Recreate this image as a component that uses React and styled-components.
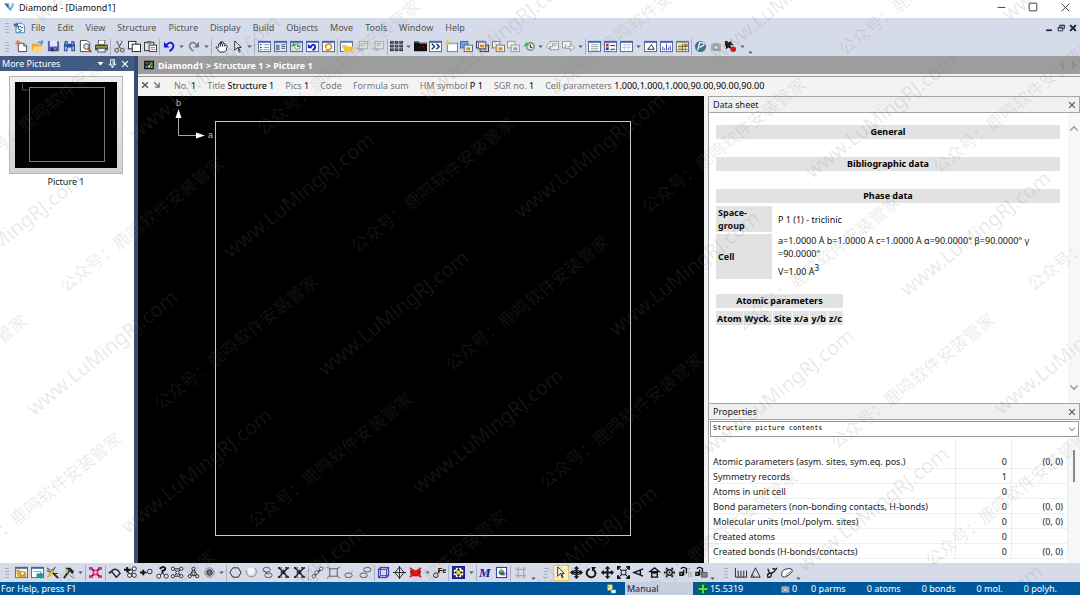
import React from 'react'
import styled, { createGlobalStyle } from 'styled-components'

const line = { fill: 'none', stroke: '#222', strokeWidth: 1 }

// Small window frame shared by many of the toolbar icons
const Win = ({ children, head = '#3c62b0', bg = '#fff' }) => (
    <>
        <rect x="0.5" y="1.5" width="13" height="11" fill={bg} stroke="#56688c" />
        <rect x="0" y="1" width="14" height="2" fill={head} />
        {children}
    </>
)

const Atoms = ({ points, r = 1.8, color = '#222' }) => (
    <>{points.map(([x, y]) => <circle key={`${x}-${y}`} cx={x} cy={y} r={r} fill="#eef1f8" stroke={color} />)}</>
)

const Stacked = ({ a = '#9db8e8', b = '#f5efc8', edge = '#4a67a5', dot = '#d98a10' }) => (
    <>
        <rect x="0.5" y="1.5" width="8" height="7" fill={a} stroke={edge} />
        <rect x="4.5" y="5.5" width="9" height="7" fill={b} stroke={edge} />
        <rect x="7" y="8" width="4" height="3" fill={dot} />
    </>
)

const icons = {
    logo: <><path d="M0 3h5l1 7z" fill="#2a75a8" /><path d="M5 3h7l-4 9-2-2z" fill="#60a8d0" /><path d="M6 3l1 6 3-6z" fill="#fff" /></>,
    doc: <><path d="M3.5 1.5h7l3 3v8h-10z" fill="#fff" stroke="#2b79a8" /><path d="M1 2h5v3H1z" fill="#2378a8" /><path d="M4 6l3-1-1 3 4 2-4 2M8 4l2 3 2-1" {...line} stroke="#174b75" /></>,
    fresh: <><path d="M3.5 3.5h6l3 3v6h-9z" fill="#fff" stroke="#444" /><path d="M9.500 3.500v3h3" {...line} stroke="#444" /><path d="M3 0v6M0 3h6M1 1l4 4M5 1L1 5" stroke="#f06a28" /></>,
    open: <><path d="M1 4h5l1 1h5v7H1z" fill="#e6a936" /><path d="M3 7h11l-3 5H1z" fill="#ffd873" /><path d="M7 3q3-3 5 0M12 0v4H9" {...line} stroke="#3269b2" /></>,
    save: <><path d="M1 1h11l1 1v10H1z" fill="#585bae" /><path d="M3 1h8v6H3z" fill="#e7e7fb" /><path d="M4 9h6v3H4z" fill="#262b55" /><path d="M8 9h1v2H8z" fill="#fff" /></>,
    find: <><path d="M2 1h3v3h4V1h3l1 5v6H9V8H5v4H1V6z" fill="#294f99" /><path d="M2 7h2v4H2zM10 7h2v4h-2zM3 2h1v3H3zM10 2h1v3h-1z" fill="#9ab4e2" /></>,
    preview: <><path d="M1.500 0.500h7l3 3v9h-10z" fill="#fff" stroke="#444" /><circle cx="8" cy="7" r="3" fill="#c9e4f0" stroke="#444" /><path d="M10 9l3 4" stroke="#b44a20" strokeWidth="2" /></>,
    print: <><path d="M4 0h7l-1 5H3z" fill="#fff" stroke="#555" /><path d="M0 5h14v6H0z" fill="#494c4b" /><path d="M1 7h12v1H1z" fill="#e5d43b" /><path d="M3 9h8v4H3z" fill="#eee" stroke="#555" /></>,
    cut: <><path d="M4 1l4 8M10 1L6 9" {...line} stroke="#444" /><circle cx="4" cy="11" r="2" {...line} stroke="#444" /><circle cx="10" cy="11" r="2" {...line} stroke="#444" /></>,
    copy: <><rect x="0.5" y="1.5" width="8" height="8" fill="#fff" stroke="#222" /><rect x="4.5" y="4.5" width="9" height="8" fill="#fff" stroke="#222" /></>,
    paste: <><rect x="0.5" y="2.5" width="10" height="9" fill="#e6e6e6" stroke="#333" /><path d="M3 1h5v3H3z" fill="#777" /><rect x="5.500" y="5.500" width="8" height="7" fill="#fff" stroke="#333" /><path d="M7 8h5M7 10h5" stroke="#888" /></>,
    undo: <><path d="M3 6q5-6 8-1 1 4-4 7" fill="none" stroke="#1717e0" strokeWidth="2" /><path d="M1 2v6h6z" fill="#1717e0" /></>,
    redo: <><path d="M11 6Q6 0 3 5q-1 4 4 7" fill="none" stroke="#777" strokeWidth="1.5" /><path d="M13 2v6H7z" fill="#777" /></>,
    hand: <path d="M4 8V4q1-1 2 1V2q1-1 1 2V2q2-1 2 1v1q2-1 2 1v1q2-1 2 1l-1 4-2 2H5L1 8q1-2 3 1M6 4v3M8 4v3M10 5v2" fill="#fff" stroke="#222" />,
    arrow: <path d="M4 1v10l3-3 2 5 1-1-2-4h3z" fill="#fff" stroke="#222" />,
    list: <Win><path d="M2 5h2M2 8h2M2 10.500h2" stroke="#222" /><path d="M6 5h6M6 8h6M6 10.500h6" stroke="#7b8fb9" /></Win>,
    split: <Win bg="#dfe8f7"><path d="M2 5h4v6H2z" fill="#6e88b6" /><path d="M8 5h4M8 7h4M8 9h4" stroke="#555" /></Win>,
    history: <Win bg="#d8e6d9"><circle cx="8" cy="7" r="3" fill="#fff" stroke="#55916a" /><path d="M8 5v2h2" {...line} /><path d="M1 7l3-4 2 3z" fill="#22a847" /></Win>,
    revert: <Win><path d="M5 7q4-4 5 0 0 3-3 4" fill="none" stroke="#1717e0" strokeWidth="2" /><path d="M2 4v5h5z" fill="#1717e0" /></Win>,
    refresh: <Win><path d="M4 9V6q3-3 6-1M10 5v4q-3 3-6 1" fill="none" stroke="#e09523" strokeWidth="2" /></Win>,
    folderwin: <><Win head="#5a7bb5"><path d="M2 5h5v4H2z" fill="#cbd7ec" /></Win><path d="M4 6h4l1 1h5v6H4z" fill="#f3c634" /></>,
    dimpage: <><rect x="3.500" y="1.500" width="9" height="8" fill="#e2e2e2" stroke="#aaa" /><path d="M5 4h6M5 6h4M0 9h7M2 11h6" stroke="#aaa" /></>,
    grid: <g fill="#333">{[0, 5, 10].map(x => [1, 5, 9].map(y => <rect key={`${x}${y}`} x={x} y={y} width="4" height="3" />))}<path d="M1 2h2M6 2h2M11 2h2M1 6h2M6 6h2M11 6h2M1 10h2M6 10h2M11 10h2" stroke="#888" /></g>,
    black: <><path d="M0 2h5l1 1h8v9H0z" fill="#150b0b" /><path d="M0 1h5l1 2H0z" fill="#3c769b" /><path d="M6 3h8v1H6z" fill="#6d8796" /><path d="M5 9l2-2M9 6l2 4" stroke="#9c1717" /></>,
    next: <Win><path d="M3 4l3 3-3 3M8 4l3 3-3 3" fill="none" stroke="#162f63" strokeWidth="1.500" /></Win>,
    newwin: <><rect x="2.500" y="3.500" width="11" height="9" fill="#fff" stroke="#667ba4" /><path d="M3 4h10" stroke="#94aed8" /><path d="M3 0v6M0 3h6M1 1l4 4M5 1L1 5" stroke="#e1cf20" /></>,
    stack1: <Stacked a="#66a4ec" />,
    stack2: <><Stacked a="#fff" edge="#333" b="#ccc" /><path d="M2.500 1.500h8v8h-8z" fill="#fff" stroke="#2d3f78" /><path d="M2 1h9v2H2z" fill="#6d85bd" /><path d="M4 5h5v3H4z" fill="#d98a10" /></>,
    stack3: <Stacked a="#eee" edge="#777" />,
    stackdim: <Stacked a="#eee" b="#eee" edge="#999" dot="#999" />,
    green: <><circle cx="8" cy="7" r="4" fill="#e5e9e5" stroke="#85a690" strokeWidth="2" /><path d="M0 7l4-5 3 4z" fill="#45bd57" /><path d="M8 5v3h2" {...line} /></>,
    prev2: <><rect x="4.500" y="1.500" width="9" height="9" fill="#eee" stroke="#999" /><path d="M12 4H7v3H4v3L0 7l4-4M8 6h3" fill="#eee" stroke="#999" /></>,
    next2: <><rect x="0.500" y="1.500" width="9" height="7" fill="#eee" stroke="#999" /><path d="M4 5v4h5v3l5-4-5-4v3H6" fill="#eee" stroke="#999" /></>,
    textwin: <Win><path d="M3 5h8M3 7h8M3 9h8M3 11h8" stroke="#a5a5a5" /></Win>,
    legend: <Win><path d="M2 4h3v3H2z" fill="#bb2537" /><path d="M2 8h3v3H2z" fill="#2939ba" /><path d="M7 6h5M7 10h5" stroke="#222" /></Win>,
    tablewin: <Win><path d="M2 5h10M2 8h10M5 4v8M9 4v8" stroke="#c6ceda" /></Win>,
    trianglewin: <Win><path d="M4 10l4-5 3 5z" {...line} /></Win>,
    chartwin: <Win><path d="M3 11V7M5 11V9M7 11V4M9 11V8M11 11V6" stroke="#3636ce" /></Win>,
    datawin: <Win head="#777"><path d="M2 4h5v8H2z" fill="#ecd878" /><path d="M8 4h5v3H8z" fill="#c99a24" /><path d="M2 7h11M2 10h11M7 4v8M10 4v8" stroke="#746641" /></Win>,
    globe: <><circle cx="7" cy="7" r="6" fill="#476f94" /><path d="M4 11l2-8q7-1 4 3L6 8" fill="none" stroke="#e6f1fa" strokeWidth="1.500" /></>,
    camera: <><path d="M3 4l2-1h5l1 1h2v8H2V4z" fill="#aaaeb4" /><circle cx="7.500" cy="8" r="2.500" fill="#ddd" stroke="#777" /></>,
    movie: <><path d="M1 1h3v2l4-2v3h2v2L7 5v3H5l-3 2V7L1 5z" fill="#171717" /><path d="M6 7l3 3" stroke="#171717" strokeWidth="2" /><circle cx="10" cy="10" r="3" fill="#dc1419" /></>,

    picset: <Win bg="#fff6d0"><path d="M1 4h4l1 2h6v6H3z" fill="#d0a83d" /><circle cx="8" cy="8" r="2" fill="#fff" stroke="#b08320" /></Win>,
    exportwin: <Win><path d="M3 6h8" stroke="#999" /><path d="M6 8h4V6l4 4-4 4v-2H6z" fill="#1796a1" /></Win>,
    wand: <><path d="M6 6l7 7" stroke="#222" strokeWidth="2" /><path d="M2 12l5-9M1 5l7 3M10 1L7 6M1 2l4 3M8 8h5" stroke="#222" /><path d="M6 4l3 2-4 5-4 1z" fill="#cfc715" /></>,
    hammer: <><path d="M3 2l6 0 4 4-2 3-3-4z" fill="#222" /><path d="M8 5l-6 8" stroke="#222" strokeWidth="2" /><path d="M3 4l4 1-1 3z" fill="#d4c51a" /><path d="M8 10l5 3" stroke="#777" /></>,
    burst: <><path d="M2 2l10 10M12 2L2 12" stroke="#161616" strokeWidth="2" /><rect x="4" y="4" width="6" height="6" fill="#ef12b8" /><path d="M0 1h4v3H0zM10 1h4v3h-4zM0 10h4v3H0zM10 10h4v3h-4z" fill="#f02084" /><circle cx="7" cy="7" r="1.500" fill="#ffe04a" /></>,
    arc: <path d="M2 8q4-7 9-3l2 3-4 4-5-6M2 8l-1-2" {...line} strokeWidth="1.500" />,
    addatoms: <><Atoms points={[[6, 10], [11, 3], [11, 10], [7, 6]]} r={2.200} /><path d="M0 4h7M3.500 1v6" stroke="#111" strokeWidth="2" /></>,
    addatom: <><path d="M0 7h7M3.500 4v6" stroke="#111" strokeWidth="2" /><circle cx="10.500" cy="6" r="2.500" {...line} /></>,
    query: <><path d="M7 7l-4 4M7 8l4 3" {...line} /><Atoms points={[[3, 11], [11, 11]]} r={2.200} /><path d="M4 3q5-4 6 0 0 2-3 2v3" fill="none" stroke="#111" strokeWidth="2" /></>,
    cluster: <><path d="M3 3l8 8M11 3l-8 8M3 3h8M3 11h8" stroke="#222" /><Atoms points={[[2, 3], [11, 3], [2, 11], [11, 11], [7, 7]]} /></>,
    tetra: <><path d="M7 3L3 10h8L7 3" {...line} /><Atoms points={[[7, 3], [3, 11], [11, 11], [7, 8]]} r={1.700} /></>,
    target: <><circle cx="7" cy="7" r="5" fill="none" stroke="#777" /><circle cx="7" cy="7" r="3" fill="#777" stroke="#222" /></>,
    hexagon: <path d="M4 2h6l3 5-3 5H4L1 7z" {...line} />,
    arcdim: <><path d="M10 2q4 3 1 8-5 4-9-1l-1-4" {...line} stroke="#888" /><path d="M3 3q3-3 7 0v6H4z" fill="#f3f4f7" /></>,
    pair: <><ellipse cx="6" cy="4" rx="4" ry="2.500" {...line} stroke="#555" /><ellipse cx="8" cy="10" rx="4" ry="2.500" {...line} stroke="#555" /><path d="M3 5l5 4" stroke="#555" /></>,
    crossatoms: <><path d="M2 2l10 10M12 2L2 12" stroke="#222" strokeWidth="1.500" /><path d="M1 2h4M9 2h4M1 12h4M9 12h4M4 7h6M7 4v6" stroke="#222" strokeWidth="2" strokeDasharray="2 1" /></>,
    bond: <><path d="M4 10l7-7" stroke="#444" strokeWidth="2" /><Atoms points={[[3, 11], [11, 3], [6, 7]]} color="#555" /></>,
    square: <><path d="M3 3h8v8H3zM0 1l3 2M14 1l-3 2M0 13l3-2M14 13l-3-2" {...line} stroke="#555" /></>,
    ring: <><ellipse cx="6" cy="10" rx="4" ry="2.500" {...line} stroke="#555" /><path d="M8 8l3-3" {...line} stroke="#aaa" /></>,
    rings: <><ellipse cx="9" cy="4" rx="4" ry="2.500" {...line} stroke="#555" /><ellipse cx="5" cy="10" rx="4" ry="2.500" {...line} stroke="#555" /></>,
    cell: <path d="M1.500 3.500h9v9h-9zM3.500 1.500h9v9h-9zM1.500 3.500l2-2M10.500 3.500l2-2M1.500 12.500l2-2M10.500 12.500l2-2" fill="none" stroke="#2525ac" />,
    planes: <path d="M7 1l5 6-5 6-5-6zM0 7h14M7 0v14" {...line} />,
    nocell: <><path d="M1 5l3-2 3 2 3-2 3 2-1 6H2z" fill="#8a2a14" /><path d="M1 2l12 10M13 2L1 12" stroke="#f21616" strokeWidth="2" /><path d="M3 5h8M3 9h8" stroke="#f21616" strokeDasharray="2 1" /></>,
    label: <><circle cx="3" cy="10" r="2.500" {...line} /><path d="M5 8l2-3" {...line} /><text x="5" y="7" fontFamily="Liberation Sans" fontSize="8" fontWeight="700">Fe</text></>,
    fit: <><rect x="1" y="1" width="12" height="12" fill="#fff" stroke="#171b9b" strokeWidth="2" /><path d="M7 2l2 3H5zM7 12l2-3H5zM2 7l3-2v4zM12 7L9 5v4z" fill="#111" /><path d="M5 5h4v4H5z" fill="#f3d42a" /><path d="M2 2h2v2H2zM10 2h2v2h-2zM2 10h2v2H2zM10 10h2v2h-2z" fill="#111" /></>,
    measure: <text x="0" y="12" fill="#1717a8" fontFamily="Liberation Serif" fontSize="14" fontStyle="italic" fontWeight="700">M</text>,
    photo: <><rect x="1.500" y="1.500" width="11" height="11" fill="#fff" stroke="#1b27a5" /><circle cx="7" cy="7" r="3" fill="#2b8c86" /><path d="M6 2l6 6-2 3-4-3z" fill="#de8b93" /><circle cx="8" cy="8" r="2" fill="#127d78" /></>,
    frame: <path d="M4.500 1v12M10.500 1v12M1 3.500h12M1 10.500h12" fill="none" stroke="#999" />,
    move3: <><path d="M7 0l3 3H4zM7 14l3-3H4zM0 7l3-3v6zM14 7l-3-3v6z" fill="#161616" /><path d="M7 2v10M2 7h10" stroke="#161616" strokeWidth="2" /><ellipse cx="7" cy="7" rx="4" ry="2.500" fill="none" stroke="#161616" /></>,
    rotate: <><path d="M5 3q-4 2-3 6 3 5 8 2 3-4-1-7" fill="none" stroke="#111" strokeWidth="2" /><path d="M7 1h5L8 6z" fill="#111" /></>,
    cross: <><path d="M7 0l3 3H4zM7 14l3-3H4zM0 7l3-3v6zM14 7l-3-3v6z" fill="#161616" /><path d="M7 2v10M2 7h10" stroke="#161616" strokeWidth="2" /></>,
    scale: <><rect x="4.500" y="4.500" width="5" height="5" fill="none" stroke="#111" /><path d="M1 4V1h3M10 1h3v3M13 10v3h-3M4 13H1v-3" fill="none" stroke="#111" strokeWidth="2" /><path d="M2 2l3 3M12 2L9 5M2 12l3-3M12 12L9 9" stroke="#111" /></>,
    angle: <path d="M12 3L2 7l10 4M9 4v6" fill="none" stroke="#111" strokeWidth="1.500" />,
    house: <path d="M7 2l5 4H2zM4 7h6v5H4zM3 12h8M7 6v3" fill="none" stroke="#111" strokeWidth="1.500" />,
    spin: <><circle cx="7" cy="7" r="3" fill="#fff" stroke="#111" strokeWidth="1.500" /><path d="M3 3h2M9 3h2M1 7h2M11 7h2M3 11h2M9 11h2M6 7h2" stroke="#111" strokeWidth="2" /></>,
    track: <><path d="M2 3q3-3 6 0v5M1 7h3v3H1zM5 4v6" fill="none" stroke="#111" strokeWidth="1.500" /><path d="M9 3h3M10.500 6v6M13 6v6" stroke="#999" /></>,
    track2: <><path d="M2 3q3-3 6 0v4M1 7h3v3H1zM5 4v6" fill="none" stroke="#111" strokeWidth="1.500" /><path d="M7 7h6v5H7z" fill="#888" stroke="#555" /></>,
    comb: <path d="M1.500 2v10h12M4.500 5v7M7.500 5v7M10.500 5v7M13.500 5v7" {...line} />,
    triangle: <path d="M2 12l5-10 5 10zM5 12q0-2-2-3" {...line} />,
    torsion: <path d="M3 3l2 5 4-1 4-5M8 3h3M5 8q-3 0-2 4 4 1 4-4l-3-1" {...line} strokeWidth="1.500" />,
    ellipse: <><path d="M2 8q0-4 6-5 6-1 5 3-2 4-8 6-4 0-3-4z" fill="#fff" stroke="#222" /><path d="M6 11q2-4 6-5" {...line} stroke="#777" /></>,
    crumb: <><path d="M0 1h14v12H0z" fill="#0d1c3f" /><path d="M2 3h4v3H2z" fill="#de291c" /><path d="M8 3h4v4H8zM2 8h3v3H2z" fill="#39b43f" /><path d="M6 7h3v4H6zM10 8h2v3h-2z" fill="#e8d82b" /></>,
    statuspic: <><path d="M2 1h7v8H2z" fill="#f5f5cf" stroke="#648e48" /><path d="M3 3h3v3H3z" fill="#d0c12e" /><path d="M7 8h7v5H7z" fill="#fff" stroke="#316696" /></>,
    plus: <><path d="M0 0h14v14H0z" fill="#0a6b3a" /><path d="M7 1v12M1 7h12" stroke="#48e060" strokeWidth="3" /><path d="M3 3h2v2H3zM9 3h2v2H9zM3 9h2v2H3zM9 9h2v2H9z" fill="#222" /></>,
    cross2: <path d="M3 3l8 8M11 3l-8 8" fill="none" stroke="#555" strokeWidth="2" />,
    corner: <path d="M3 3l7 7M10 4v6H4" fill="none" stroke="#777" strokeWidth="2" />,
    min: <path d="M3 7.500h9" stroke="#222" />,
    max: <rect x="2.500" y="2.500" width="9" height="9" rx="1" fill="none" stroke="#222" />,
    close: <path d="M3 3l9 9M12 3l-9 9" stroke="#222" />,
    mdimin: <path d="M2 11h10" stroke="#15203e" strokeWidth="3" />,
    mdirestore: <path d="M5 5V2h8v6h-3M5 3h8M2 6h8v6H2zM2 7h8" fill="none" stroke="#15203e" strokeWidth="1.500" />,
    mdiclose: <path d="M2 2l10 10M12 2L2 12" stroke="#15203e" strokeWidth="3.500" />,
    caret: <path d="M1 4h12L7 11z" fill="currentColor" />,
    pin: <path d="M4 1h6v7h2v1H8v4H6V9H2V8h2zM8 2v6" fill="none" stroke="currentColor" strokeWidth="1.500" />,
    x: <path d="M2 2l10 10M12 2L2 12" stroke="currentColor" strokeWidth="2" />,
    up: <path d="M2 9l5-5 5 5" fill="none" stroke="#999" strokeWidth="2" />,
    down: <path d="M2 5l5 5 5-5" fill="none" stroke="#999" strokeWidth="2" />,
    left: <path d="M10 2v10L4 7z" fill="none" stroke="#777" />,
    right: <path d="M4 2v10l6-5z" fill="none" stroke="#777" />,
}

const Icon = ({ name, size = 12 }) => <Svg viewBox="0 0 14 14" width={size} height={size} aria-hidden="true">{icons[name]}</Svg>

// '-' in a group is a drop-down arrow, '+' is the overflow arrow at the end of a bar
const topGroups = [
    [98, ['fresh', 'open', 'save', 'find', 'preview', 'print']],
    [49, ['cut', 'copy', 'paste']],
    [52, ['undo', '-', 'redo', '-']],
    [43, ['hand', 'arrow', '-']],
    [83, ['list', 'split', 'history', 'revert', 'refresh']],
    [50, ['folderwin', 'dimpage', 'dimpage']],
    [198, ['grid', '-', 'black', 'next', 'newwin', 'stack1', 'stack2', 'stack3', 'stackdim', 'green', '-', 'prev2', 'next2', '-']],
    [106, ['textwin', 'legend', 'tablewin', '-', 'trianglewin', 'chartwin', 'datawin']],
    [64, ['globe', 'camera', 'movie', '-', '+'], true],
]
const buildGroups = [
    [73, ['picset', 'exportwin', 'wand', 'hammer', '-']],
    [20, ['burst']],
    [121, ['arc', 'addatoms', 'addatom', 'query', 'cluster', 'tetra', 'target', '-']],
    [82, ['hexagon', 'arcdim', 'pair', 'crossatoms', 'crossatoms']],
    [66, ['bond', 'square', 'ring', 'rings']],
    [74, ['cell', 'planes', 'nocell', '-', 'label']],
    [28, ['fit', '-']],
    [34, ['measure', 'photo']],
    [28, ['frame', '+'], true],
]
const moveGroups = [[167, ['arrow', 'move3', 'rotate', 'cross', 'scale', 'angle', 'house', 'spin', 'track', 'track2', '+'], true]]
const measureGroups = [[72, ['comb', 'triangle', 'torsion', 'ellipse', '+'], true]]

const menus = ['File', 'Edit', 'View', 'Structure', 'Picture', 'Display', 'Build', 'Objects', 'Move', 'Tools', 'Window', 'Help']

const info = [
    ['No.', '1'], ['Title', 'Structure 1'], ['Pics', '1'], ['Code', ''], ['Formula sum', ''],
    ['HM symbol', 'P 1'], ['SGR no.', '1'], ['Cell parameters', '1.000,1.000,1.000,90.00,90.00,90.00'],
]

const properties = [
    ['Atomic parameters (asym. sites, sym.eq. pos.)', '0', '(0, 0)'],
    ['Symmetry records', '1', ''],
    ['Atoms in unit cell', '0', ''],
    ['Bond parameters (non-bonding contacts, H-bonds)', '0', '(0, 0)'],
    ['Molecular units (mol./polym. sites)', '0', '(0, 0)'],
    ['Created atoms', '0', ''],
    ['Created bonds (H-bonds/contacts)', '0', '(0, 0)'],
]

const Groups = ({ groups, active }) => groups.map(([width, items, last], g) => (
    <ToolGroup key={g} $width={width} $last={last}>
        {items.map((item, i) => item === '-' || item === '+'
            ? <CaretButton key={i} aria-label="More options" $low={item === '+'}><Icon name="caret" size={5} /></CaretButton>
            : <ToolButton key={i} aria-label={item} $active={item === active}><Icon name={item} size={13} /></ToolButton>
        )}
    </ToolGroup>
))

// Only the cells of the rotated sheet that cross the window carry a text
const onPage = (row, col) => {
    const v = 75.5 * row - 40
    const start = 252 * col - (row % 2 ? 486 : 384)
    return [20, 100, 185].some(d => {
        const x = 0.78 * (start + d) + 0.625 * v
        const y = 0.78 * v - 0.625 * (start + d)
        return x > 0 && x < 1080 && y > 0 && y < 583
    })
}

const Watermark = () => (
    <WatermarkLayer aria-hidden="true">
        <WatermarkSheet>
            {[...Array(16)].map((_, row) => (
                <WatermarkRow key={row} $latin={row % 2 === 1}>
                    {[...Array(6)].map((_, col) => (
                        <WatermarkText key={col} $latin={row % 2 === 1}>
                            {onPage(row, col) && (row % 2 ? 'www.LuMingRJ.com' : '公众号：鹿鸣软件安装管家')}
                        </WatermarkText>
                    ))}
                </WatermarkRow>
            ))}
        </WatermarkSheet>
    </WatermarkLayer>
)

const App = () => (
    <Window>
        <GlobalStyle />
        <TitleBar>
            <Icon name="logo" />
            <Title>Diamond - [Diamond1]</Title>
            <WindowButtons>
                <PlainButton aria-label="Minimize"><Icon name="min" /></PlainButton>
                <PlainButton aria-label="Maximize"><Icon name="max" /></PlainButton>
                <PlainButton aria-label="Close"><Icon name="close" /></PlainButton>
            </WindowButtons>
        </TitleBar>

        <MenuBar>
            <Grip />
            <Icon name="doc" />
            <Menus>
                {menus.map(menu => <PlainButton key={menu}>{menu}</PlainButton>)}
            </Menus>
            <MdiButtons>
                <PlainButton aria-label="Minimize document"><Icon name="mdimin" size={8} /></PlainButton>
                <PlainButton aria-label="Restore document"><Icon name="mdirestore" size={8} /></PlainButton>
                <PlainButton aria-label="Close document"><Icon name="mdiclose" size={8} /></PlainButton>
            </MdiButtons>
        </MenuBar>
        <ToolBar>
            <Grip />
            <Groups groups={topGroups} />
        </ToolBar>

        <Workspace>
            <Dock>
                <DockHead>
                    <DockTitle>More Pictures</DockTitle>
                    <PlainButton aria-label="Options"><Icon name="caret" size={7} /></PlainButton>
                    <PlainButton aria-label="Pin"><Icon name="pin" size={9} /></PlainButton>
                    <PlainButton aria-label="Close pictures"><Icon name="x" size={8} /></PlainButton>
                </DockHead>
                <Picture>
                    <Thumb>
                        <svg viewBox="0 0 102 86" width="102" height="86" aria-hidden="true">
                            <rect width="102" height="86" />
                            <rect x="14.5" y="5.5" width="75" height="74" fill="none" stroke="#777" />
                            <path d="M7.500 1v7h6" fill="none" stroke="#555" />
                        </svg>
                    </Thumb>
                    Picture 1
                </Picture>
            </Dock>

            <Document>
                <Crumbs>
                    <Icon name="crumb" size={10} />
                    <CrumbText>Diamond1 &gt; Structure 1 &gt; Picture 1</CrumbText>
                    <PlainButton aria-label="Previous"><Icon name="left" size={8} /></PlainButton>
                    <PlainButton aria-label="Next"><Icon name="right" size={8} /></PlainButton>
                </Crumbs>
                <InfoBar>
                    <PlainButton aria-label="Hide info"><Icon name="cross2" size={10} /></PlainButton>
                    <PlainButton aria-label="Expand info"><Icon name="corner" size={10} /></PlainButton>
                    <InfoItems>
                        {info.map(([label, value]) => <InfoItem key={label}>{label} <b>{value}</b></InfoItem>)}
                    </InfoItems>
                </InfoBar>
                <Content>
                    <Canvas>
                        <svg width="566" height="466" viewBox="0 0 566 466" role="img" aria-label="Unit cell">
                            <rect x="77.5" y="25.500" width="415" height="414" fill="none" stroke="#c8c8c8" />
                            <path d="M40.500 20v19.500H60" fill="none" stroke="#aaa" />
                            <path d="M40.500 13l3 9h-6zM67 39.500l-9 3v-6z" fill="#fff" />
                            <g fill="#bbb" fontFamily="Liberation Sans" fontSize="9">
                                <text x="38" y="10">b</text>
                                <text x="70" y="42">a</text>
                            </g>
                        </svg>
                    </Canvas>
                    <Side>
                        <PanelHead>
                            <PanelTitle>Data sheet</PanelTitle>
                            <PlainButton aria-label="Close data sheet"><Icon name="x" size={8} /></PlainButton>
                        </PanelHead>
                        <Sheet>
                            <SheetBody>
                                <SheetHead>General</SheetHead>
                                <SheetHead>Bibliographic data</SheetHead>
                                <PhaseHead>Phase data</PhaseHead>
                                <PhaseTable>
                                    <tbody>
                                        <tr><th scope="row">Space-<br />group</th><td>P 1 (1) - triclinic</td></tr>
                                        <tr>
                                            <th scope="row">Cell</th>
                                            <td>a=1.0000 Å b=1.0000 Å c=1.0000 Å α=90.0000° β=90.0000° γ<br />=90.0000°<br /><Volume>V=1.00 Å<sup>3</sup></Volume></td>
                                        </tr>
                                    </tbody>
                                </PhaseTable>
                                <AtomTable>
                                    <caption>Atomic parameters</caption>
                                    <thead>
                                        <tr>{['Atom', 'Wyck.', 'Site', 'x/a', 'y/b', 'z/c'].map(h => <th key={h} scope="col">{h}</th>)}</tr>
                                    </thead>
                                </AtomTable>
                            </SheetBody>
                            <ScrollBar>
                                <PlainButton aria-label="Scroll up"><Icon name="up" size={10} /></PlainButton>
                                <PlainButton aria-label="Scroll down"><Icon name="down" size={10} /></PlainButton>
                            </ScrollBar>
                        </Sheet>
                        <PanelHead>
                            <PanelTitle>Properties</PanelTitle>
                            <PlainButton aria-label="Close properties"><Icon name="x" size={8} /></PlainButton>
                        </PanelHead>
                        <SelectBox>
                            <Select aria-label="Property set" defaultValue="contents">
                                <option value="contents">Structure picture contents</option>
                            </Select>
                            <Icon name="down" size={8} />
                        </SelectBox>
                        <PropertyPane>
                            <PropertyTable>
                                <tbody>
                                    <tr><td /><td /><td /></tr>
                                    {properties.map(([name, value, extra]) => (
                                        <tr key={name}><td>{name}</td><td>{value}</td><td>{extra}</td></tr>
                                    ))}
                                </tbody>
                            </PropertyTable>
                            <ThumbTrack><ThumbBar /></ThumbTrack>
                        </PropertyPane>
                    </Side>
                </Content>
            </Document>
        </Workspace>

        <ToolBar>
            <Grip />
            <Groups groups={buildGroups} />
            <Grip />
            <Groups groups={moveGroups} active="arrow" />
            <Grip />
            <Groups groups={measureGroups} />
        </ToolBar>
        <StatusBar>
            <StatusHelp>For Help, press F1</StatusHelp>
            <StatusTools>
                <Icon name="statuspic" size={10} />
                <Mode>Manual</Mode>
                <Icon name="plus" size={10} />
                <Zoom>15.5319</Zoom>
                <Icon name="camera" size={10} />
                <span>0</span>
            </StatusTools>
            <Counts>
                {['parms', 'atoms', 'bonds', 'mol.', 'polyh.'].map(c => <span key={c}>0 {c}</span>)}
            </Counts>
        </StatusBar>
        <Watermark />
    </Window>
)

export default App


const GlobalStyle = createGlobalStyle`
    * { box-sizing: border-box; }
    body {
        margin: 0;
        font: 9px/13px "Noto Sans", "Open Sans", "Noto Sans CJK SC", sans-serif;
        color: #222;
    }
    button, select { font: inherit; color: inherit; }
`
const Window = styled.div`
    position: relative;
    display: flex;
    flex-direction: column;
    height: 100vh;
    overflow: hidden;
    background: #fff;
`
const Svg = styled.svg`
    display: block;
    flex: none;
`
const PlainButton = styled.button`
    display: flex;
    align-items: center;
    justify-content: center;
    padding: 0;
    border: 0;
    background: none;
`
const TitleBar = styled.header`
    display: flex;
    align-items: center;
    gap: 3px;
    height: 18px;
    padding: 0 9px 4px 4px;
`
const Title = styled.h1`
    flex: 1;
    margin: 0;
    font-size: 9px;
    font-weight: 400;
    color: #111;
`
const WindowButtons = styled.div`
    display: flex;
    gap: 20px;
`
//*************************** */

const MenuBar = styled.nav`
    display: flex;
    align-items: center;
    height: 19px;
    padding-right: 3px;
    background: #d6dbe9;
    color: #555;
`
const Grip = styled.span`
    flex: none;
    width: 4px;
    height: 12px;
    margin: 0 4px 0 5px;
    background: radial-gradient(circle, #aab0c2 1px, transparent 1px) 0 0 / 2px 3px;
`
const Menus = styled.div`
    display: flex;
    flex: 1;
    gap: 12px;
    margin-left: 6px;
`
const MdiButtons = styled.div`
    display: flex;
    gap: 4px;
`
const ToolBar = styled.div`
    display: flex;
    align-items: center;
    height: 19px;
    background: #d6dbe9;
`
const ToolGroup = styled.div`
    display: flex;
    align-items: center;
    width: ${(props) => props.$width}px;
    height: 16px;
    padding: 0 1px;
    border-right: 1px solid ${(props) => props.$last ? "transparent" : "#a9afc0"};
`
const ToolButton = styled(PlainButton)`
    flex: 1 1 0;
    min-width: 0;
    height: 16px;
    background: ${(props) => props.$active ? "#fff0c0" : "none"};
    outline: ${(props) => props.$active ? "1px solid #e5c365" : "none"};
    outline-offset: -1px;
`
const CaretButton = styled(PlainButton)`
    flex: 0 0 8px;
    align-self: ${(props) => props.$low ? "flex-end" : "center"};
    color: #555b6b;
`
//*************************** */

const Workspace = styled.main`
    display: flex;
    flex: 1;
    min-height: 0;
`
const Dock = styled.aside`
    flex: none;
    width: 138px;
    border-right: 4px solid #364e76;
`
const DockHead = styled.div`
    display: flex;
    align-items: center;
    gap: 4px;
    height: 15px;
    padding: 0 5px 0 2px;
    background: #425b83;
    color: #fff;
`
const DockTitle = styled.h2`
    flex: 1;
    margin: 0;
    font-size: 9px;
    font-weight: 400;
`
const Picture = styled.figure`
    display: flex;
    flex-direction: column;
    align-items: center;
    gap: 1px;
    margin: 5px 2px 0 0;
`
const Thumb = styled.div`
    display: flex;
    justify-content: center;
    padding: 5px;
    border: 1px solid #b5b5b5;
    background: linear-gradient(#f0f0f0, #d2d2d2);
`
const Document = styled.section`
    display: flex;
    flex: 1;
    flex-direction: column;
    min-width: 0;
    background: #f0f0f0;
`
const Crumbs = styled.div`
    display: flex;
    align-items: center;
    gap: 4px;
    height: 18px;
    padding: 0 2px 0 6px;
    background: #9d9d9d;
`
const CrumbText = styled.span`
    flex: 1;
    font-weight: 700;
    color: #fff;
`
const InfoBar = styled.div`
    display: flex;
    align-items: center;
    gap: 2px;
    height: 20px;
    margin-top: 2px;
    padding: 0 2px 3px;
    border-top: 1px solid #999;
    background: #f4f4f4;
`
const InfoItems = styled.div`
    display: flex;
    gap: 11px;
    margin-left: 10px;
    white-space: nowrap;
`
const InfoItem = styled.span`
    color: #777;

    b {
        font-weight: 400;
        color: #000;
    }
`
const Content = styled.div`
    display: grid;
    flex: 1;
    grid-template-columns: 1fr 372px;
    gap: 4px;
    min-height: 0;
`
const Canvas = styled.div`
    overflow: hidden;
    background: #000;
`
//*************************** */

const Side = styled.aside`
    display: flex;
    flex-direction: column;
    min-height: 0;
    border-left: 1px solid #a5a5a5;
    background: #fff;
`
const PanelHead = styled.div`
    display: flex;
    flex: none;
    align-items: center;
    justify-content: space-between;
    height: 17px;
    padding: 0 3px 0 4px;
    border: 1px solid #a5a5a5;
    border-left: 0;
    background: #f0f0f0;
    color: #555;
`
const PanelTitle = styled.h2`
    margin: 0;
    font-size: 9px;
    font-weight: 400;
    color: #222;
`
const Sheet = styled.div`
    display: flex;
    flex: 1;
    min-height: 0;
`
const SheetBody = styled.div`
    flex: 1;
    padding: 12px 8px 0 7px;
`
const SheetHead = styled.h3`
    height: 14px;
    margin: 0 0 18px;
    background: #e2e2e2;
    color: #000;
    font-size: 9px;
    font-weight: 700;
    line-height: 13px;
    text-align: center;
`
const PhaseHead = styled(SheetHead)`
    margin-bottom: 3px;
`
const PhaseTable = styled.table`
    width: 100%;
    border-spacing: 0;
    color: #111;

    th {
        width: 56px;
        padding: 0 2px;
        background: #e2e2e2;
        text-align: left;
    }
    td {
        padding: 0 0 0 6px;
    }
    tr + tr th {
        height: 47px;
        border-top: 2px solid #fff;
    }
`
const Volume = styled.span`
    display: inline-block;
    padding-top: 5px;

    sup {
        font-size: 8px;
        line-height: 1px;
    }
`
const AtomTable = styled.table`
    margin-top: 15px;
    border-spacing: 0;
    color: #000;

    caption, th {
        height: 14px;
        background: #e2e2e2;
        font-weight: 700;
    }
    caption {
        margin-bottom: 3px;
    }
    th {
        padding: 0 1px;
        border-right: 1px solid #fff;
    }
    th:last-child {
        border-right: 0;
    }
`
const ScrollBar = styled.div`
    display: flex;
    flex-direction: column;
    justify-content: space-between;
    align-items: center;
    width: 12px;
    padding: 11px 0;
    background: #f7f7f7;
`
const SelectBox = styled.div`
    display: flex;
    flex: none;
    align-items: center;
    height: 16px;
    margin: 1px 1px 2px;
    padding-right: 2px;
    border: 1px solid #999;
`
const Select = styled.select`
    flex: 1;
    height: 14px;
    padding: 0 2px 1px;
    border: 0;
    appearance: none;
    background: none;
    color: #000;
    font-family: "DejaVu Sans Mono", monospace;
    font-size: 7px;
`
const PropertyPane = styled.div`
    display: flex;
    flex: none;
    height: 124px;
    overflow: hidden;
`
const PropertyTable = styled.table`
    flex: 1;
    align-self: flex-start;
    table-layout: fixed;
    border-spacing: 0;
    white-space: nowrap;

    td {
        height: 15px;
        padding: 0 4px;
        border-right: 1px solid #eee;
        border-bottom: 1px solid #f0f0f0;
        text-align: right;
    }
    td:first-child {
        text-align: left;
    }
    td:nth-child(2), td:nth-child(3) {
        width: 56px;
    }
    tr:first-child td {
        border-bottom-color: transparent;
    }
`
const ThumbTrack = styled.div`
    width: 12px;
    padding: 11px 5px 0;
    background: #f7f7f7;
`
const ThumbBar = styled.div`
    width: 2px;
    height: 32px;
    background: #888;
`
//*************************** */

const StatusBar = styled.footer`
    display: flex;
    align-items: center;
    height: 13px;
    padding: 0 23px 0 1px;
    background: #00589a;
    color: #fff;
`
const StatusHelp = styled.span`
    flex: 1;
`
const StatusTools = styled.div`
    display: flex;
    align-items: center;
    gap: 2px;
    margin-right: 14px;
`
const Mode = styled.span`
    width: 68px;
    margin: 0 3px 0 7px;
    padding-left: 2px;
    background: #c6cfe0;
    color: #222;
`
const Zoom = styled.span`
    width: 68px;
`
const Counts = styled.div`
    display: flex;
    gap: 21px;
`
//*************************** */

const WatermarkLayer = styled.div`
    position: absolute;
    inset: 0 0 13px;
    overflow: hidden;
    pointer-events: none;
`
const WatermarkSheet = styled.div`
    width: max-content;
    transform: rotate(-38.7deg) translate(-384px, -76px);
    transform-origin: 0 0;
`
const WatermarkRow = styled.div`
    display: flex;
    align-items: center;
    height: ${(props) => props.$latin ? 76 : 75}px;
    margin-left: ${(props) => props.$latin ? "-102px" : 0};
`
const WatermarkText = styled.span`
    flex: none;
    width: 252px;
    color: rgba(120, 120, 120, 0.16);
    font-size: ${(props) => props.$latin ? 20 : 17}px;
    line-height: 24px;
`
